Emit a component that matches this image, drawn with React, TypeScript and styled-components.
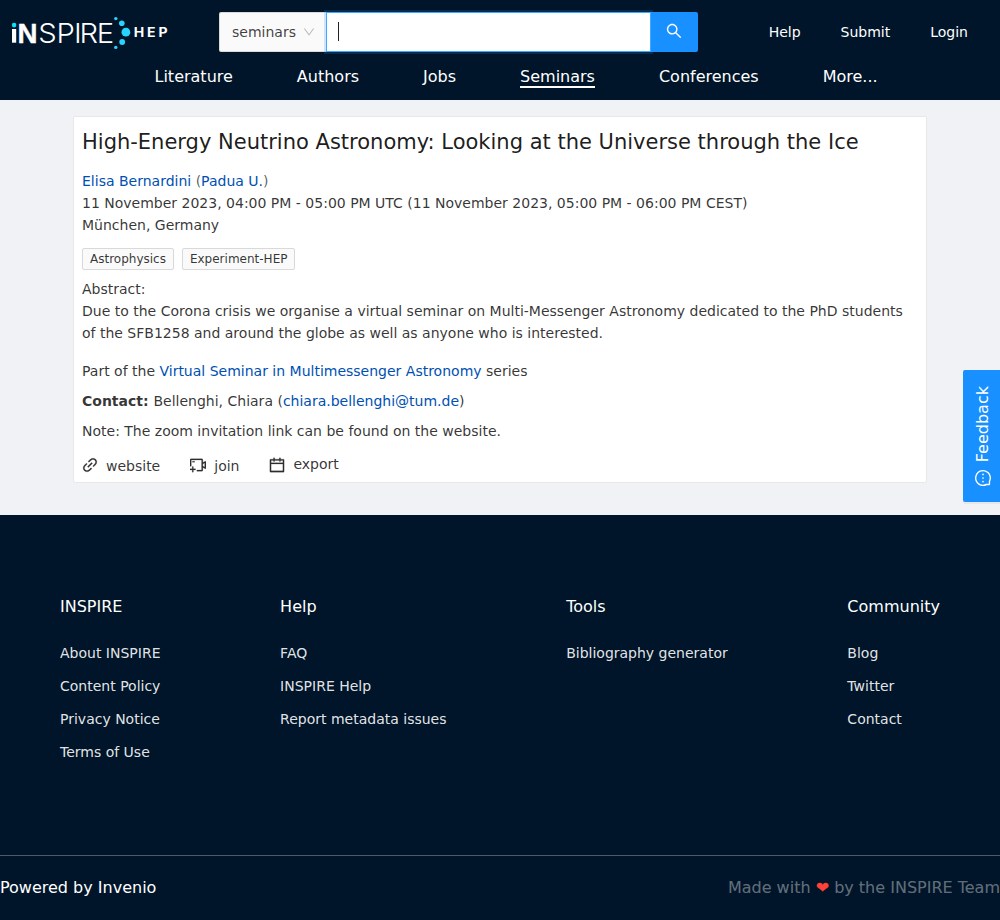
import React from 'react';
import styled, { createGlobalStyle } from 'styled-components';
import {
  AiOutlineSearch,
  AiOutlineLink,
  AiOutlineVideoCameraAdd,
  AiOutlineCalendar,
  AiOutlineMessage,
  AiOutlineDown,
} from 'react-icons/ai';

const GlobalStyle = createGlobalStyle`
  *, *::before, *::after { box-sizing: border-box; }
  body {
    margin: 0;
    background: #f0f2f5;
    color: rgba(0, 0, 0, 0.85);
    font-family: "DejaVu Sans", sans-serif;
    font-size: 14px;
    line-height: 22px;
    overflow: hidden;
  }
  h1, h2, p, ul { margin: 0; padding: 0; font-weight: 400; }
  li { list-style: none; }
  a { text-decoration: none; color: inherit; }
  svg { display: block; flex: none; }
`;

const Page = styled.div`
  display: flex;
  flex-direction: column;
  height: 920px;
`;

const Header = styled.header`
  height: 100px;
  background: #001529;
  color: #fff;
`;

const TopBar = styled.div`
  display: flex;
  align-items: center;
  height: 64px;
  padding: 0 32px 0 8px;
`;

const LogoLink = styled.a`
  width: 211px;
  height: 40px;
`;

const Search = styled.form`
  display: flex;
  width: 479px;
  height: 40px;
`;

const Scope = styled.div`
  display: flex;
  align-items: center;
  gap: 7px;
  width: 107px;
  padding-left: 12px;
  border: 1px solid #d9d9d9;
  border-right: 0;
  border-radius: 2px 0 0 2px;
  background: #fafafa;
  color: rgba(0, 0, 0, 0.75);
  svg { color: rgba(0, 0, 0, 0.25); }
`;

const Field = styled.div`
  display: flex;
  align-items: center;
  width: 325px;
  padding: 0 0 2px 11px;
  border: 1px solid #40a9ff;
  background: #fff;
  box-shadow: 0 0 0 2px rgba(24, 144, 255, 0.2);
`;

const Caret = styled.span`
  width: 1px;
  height: 19px;
  background: #222;
`;

const SearchButton = styled.button`
  display: flex;
  align-items: center;
  justify-content: center;
  flex: 1;
  padding: 0 1px 2px 0;
  border: 0;
  border-radius: 0 2px 2px 0;
  background: #1890ff;
  color: #fff;
`;

const Account = styled.nav`
  display: flex;
  gap: 40px;
  margin-left: auto;
`;

const Nav = styled.nav`
  display: flex;
  gap: 64px;
  padding-left: 154.5px;
  font-size: 16px;
`;

const NavItem = styled.a<{ $active?: boolean }>`
  height: 24px;
  line-height: 25px;
  border-bottom: 2px solid ${(p) => (p.$active ? '#fff' : 'transparent')};
`;

const Content = styled.main`
  height: 415px;
  padding: 16px 73px;
  background: #f0f2f5;
`;

const Card = styled.article`
  height: 367px;
  padding: 8px;
  border: 1px solid #e8e8e8;
  border-radius: 2px;
  background: #fff;
  color: rgba(0, 0, 0, 0.8);
`;

const Title = styled.h1`
  height: 45px;
  color: rgba(0, 0, 0, 0.9);
  font-size: 21px;
  line-height: 35px;
`;

const Link = styled.a`
  color: #0050b3;
`;

const Muted = styled.span`
  color: rgba(0, 0, 0, 0.65);
`;

const Tags = styled.div`
  display: flex;
  gap: 8px;
  margin: 12px 0 8px;
`;

const Tag = styled.span`
  height: 22px;
  padding: 0 7px;
  border: 1px solid #d9d9d9;
  border-radius: 2px;
  background: #fafafa;
  font-size: 12px;
  line-height: 20px;
`;

const Paragraph = styled.p<{ $gap: number }>`
  margin-top: ${(p) => p.$gap}px;
`;

const Actions = styled.div`
  display: flex;
  gap: 30px;
  margin-top: 12px;
`;

const Action = styled.a<{ $raised?: boolean }>`
  display: flex;
  align-items: center;
  gap: 8px;
  height: 22px;
  span { padding-${(p) => (p.$raised ? 'bottom' : 'top')}: 2px; }
  svg { stroke: currentColor; stroke-width: 12px; }
`;

const Feedback = styled.button`
  position: absolute;
  right: 0;
  top: 370px;
  display: flex;
  flex-direction: column;
  align-items: center;
  gap: 8px;
  width: 37px;
  height: 132px;
  padding: 16px 0 0 2px;
  border: 0;
  border-radius: 2px 0 0 2px;
  background: #1890ff;
  color: #fff;
  font: 16px/24px "DejaVu Sans", sans-serif;
  box-shadow: 0 2px 0 rgba(0, 0, 0, 0.045);
  span { writing-mode: vertical-rl; transform: rotate(180deg); }
  svg { transform: rotate(-90deg); }
`;

const Footer = styled.footer`
  flex: 1;
  background: #001529;
  color: #fff;
`;

const FooterColumns = styled.div`
  display: flex;
  justify-content: space-between;
  height: 340px;
  padding: 79px 60px 0;
`;

const FooterTitle = styled.h2`
  margin-bottom: 18px;
  font-size: 16px;
  line-height: 25px;
`;

const FooterItem = styled.li`
  height: 33px;
  line-height: 33px;
  color: rgba(255, 255, 255, 0.9);
`;

const BottomBar = styled.div`
  display: flex;
  justify-content: space-between;
  height: 65px;
  border-top: 1px solid rgba(255, 255, 255, 0.3);
  font-size: 16px;
  line-height: 63px;
`;

const Credit = styled.span`
  color: rgba(255, 255, 255, 0.4);
`;

const Heart = styled.span`
  color: #ff4136;
`;

// Trims the empty margin that the Ant Design glyphs carry on each side.
const tight = { viewBox: '64 64 896 896' };

const Logo = () => (
  <svg width="170" height="40" viewBox="8 12 170 40" fill="#fff">
    <rect x="12" y="29" width="4.2" height="13.7" />
    <circle cx="14.1" cy="25.1" r="2.3" fill="#00e5ff" />
    <text x="17.6" y="42.7" fontFamily="Liberation Sans, sans-serif" fontWeight="700" fontSize="27.5" stroke="#fff" strokeWidth="0.4" textLength="20" lengthAdjust="spacingAndGlyphs">N</text>
    <text transform="translate(38.3 42.7) scale(1.08 1)" x="0 16.9 33 38.2 54.2" y="0" fontFamily="Inter, sans-serif" fontWeight="300" fontSize="27">SPIRE</text>
    <g fill="#27d3ff">
      <circle cx="115.8" cy="18.6" r="1.7" />
      <circle cx="121.8" cy="23.2" r="2.8" />
      <circle cx="125.9" cy="32.2" r="4.4" />
      <circle cx="122.2" cy="42" r="2.9" />
      <circle cx="115.8" cy="47.4" r="1.7" />
    </g>
    <text transform="translate(133.8 36.8) scale(1.12 1)" x="0 11.7 22" y="0" fontFamily="Inter, sans-serif" fontWeight="700" fontSize="12.5">HEP</text>
  </svg>
);

const sections = ['Literature', 'Authors', 'Jobs', 'Seminars', 'Conferences', 'More...'];

const footerColumns = [
  { title: 'INSPIRE', items: ['About INSPIRE', 'Content Policy', 'Privacy Notice', 'Terms of Use'] },
  { title: 'Help', items: ['FAQ', 'INSPIRE Help', 'Report metadata issues'] },
  { title: 'Tools', items: ['Bibliography generator'] },
  { title: 'Community', items: ['Blog', 'Twitter', 'Contact'] },
];

export default function App() {
  return (
    <Page>
      <GlobalStyle />
      <Header>
        <TopBar>
          <LogoLink><Logo /></LogoLink>
          <Search>
            <Scope>seminars <AiOutlineDown size={12} {...tight} /></Scope>
            <Field><Caret /></Field>
            <SearchButton type="button"><AiOutlineSearch size={16} {...tight} /></SearchButton>
          </Search>
          <Account>
            <a>Help</a>
            <a>Submit</a>
            <a>Login</a>
          </Account>
        </TopBar>
        <Nav>
          {sections.map((name) => (
            <NavItem key={name} $active={name === 'Seminars'}>{name}</NavItem>
          ))}
        </Nav>
      </Header>
      <Content>
        <Card>
          <Title>High-Energy Neutrino Astronomy: Looking at the Universe through the Ice</Title>
          <p><Link>Elisa Bernardini</Link><Muted> (</Muted><Link>Padua U.</Link><Muted>)</Muted></p>
          <p>11 November 2023, 04:00 PM - 05:00 PM UTC (11 November 2023, 05:00 PM - 06:00 PM CEST)</p>
          <p>München, Germany</p>
          <Tags>
            <Tag>Astrophysics</Tag>
            <Tag>Experiment-HEP</Tag>
          </Tags>
          <p>Abstract:</p>
          <p>
            Due to the Corona crisis we organise a virtual seminar on Multi-Messenger Astronomy dedicated to the PhD students
            of the SFB1258 and around the globe as well as anyone who is interested.
          </p>
          <Paragraph $gap={16}>Part of the <Link>Virtual Seminar in Multimessenger Astronomy</Link> series</Paragraph>
          <Paragraph $gap={8}><b>Contact: </b>Bellenghi, Chiara (<Link>chiara.bellenghi@tum.de</Link>)</Paragraph>
          <Paragraph $gap={8}>Note: The zoom invitation link can be found on the website.</Paragraph>
          <Actions>
            <Action><AiOutlineLink size={16} {...tight} /><span>website</span></Action>
            <Action><AiOutlineVideoCameraAdd size={16} {...tight} /><span>join</span></Action>
            <Action $raised><AiOutlineCalendar size={16} {...tight} /><span>export</span></Action>
          </Actions>
        </Card>
      </Content>
      <Footer>
        <FooterColumns>
          {footerColumns.map(({ title, items }) => (
            <section key={title}>
              <FooterTitle>{title}</FooterTitle>
              <ul>{items.map((item) => <FooterItem key={item}>{item}</FooterItem>)}</ul>
            </section>
          ))}
        </FooterColumns>
        <BottomBar>
          <span>Powered by Invenio</span>
          <Credit>Made with <Heart>❤</Heart> by the INSPIRE Team</Credit>
        </BottomBar>
      </Footer>
      <Feedback type="button"><span>Feedback</span><AiOutlineMessage size={16} {...tight} /></Feedback>
    </Page>
  );
}
